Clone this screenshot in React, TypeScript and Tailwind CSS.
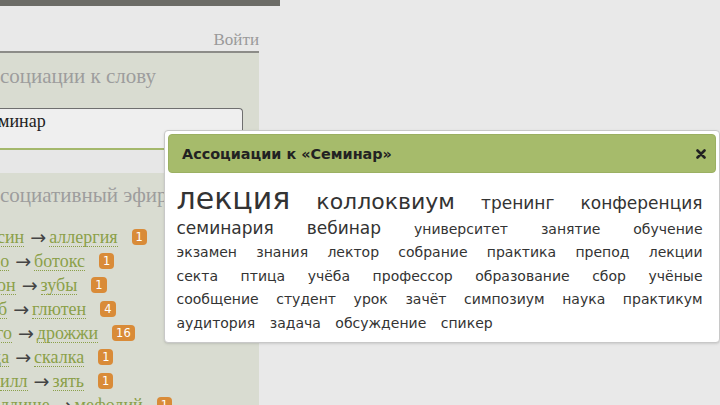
import React from 'react';

const serif = { fontFamily: '"Liberation Serif", "DejaVu Serif", serif' };
const sans = { fontFamily: '"DejaVu Sans", Verdana, sans-serif' };

type Row = { from: string; to: string; count: number; off: string };

// the page is scrolled sideways, so the first word of each row is cut at the edge
const rows: Row[] = [
  { from: 'син', to: 'аллергия', count: 1, off: '-ml-[3px]' },
  { from: 'до', to: 'ботокс', count: 1, off: '-ml-[9px]' },
  { from: 'он', to: 'зубы', count: 1, off: '-ml-[3px]' },
  { from: 'б', to: 'глютен', count: 4, off: '-ml-[2px]' },
  { from: 'го', to: 'дрожжи', count: 16, off: '-ml-[4px]' },
  { from: 'да', to: 'скалка', count: 1, off: '-ml-[8px]' },
  { from: 'илл', to: 'зять', count: 1, off: 'ml-0' },
  { from: 'лдище', to: 'мефодий', count: 1, off: 'ml-0' },
];

// word + size; the cloud is justified like the original
const words: [string, string][] = [
  ['лекция', 'text-[30px]'],
  ['коллоквиум', 'text-[22px]'],
  ['тренинг', 'text-[17px]'],
  ['конференция', 'text-[17px]'],
  ['семинария', 'text-[17px]'],
  ['вебинар', 'text-[17px]'],
  ['университет', ''],
  ['занятие', ''],
  ['обучение', ''],
  ['экзамен', ''],
  ['знания', ''],
  ['лектор', ''],
  ['собрание', ''],
  ['практика', ''],
  ['препод', ''],
  ['лекции', ''],
  ['секта', ''],
  ['птица', ''],
  ['учёба', ''],
  ['профессор', ''],
  ['образование', ''],
  ['сбор', ''],
  ['учёные', ''],
  ['сообщение', ''],
  ['студент', ''],
  ['урок', ''],
  ['зачёт', ''],
  ['симпозиум', ''],
  ['наука', ''],
  ['практикум', ''],
  ['аудитория', ''],
  ['задача', ''],
  ['обсуждение', ''],
  ['спикер', ''],
];

export default function App() {
  return (
    <div className="relative w-[720px] h-[405px] overflow-hidden bg-[#e9e9e9]">
      {/* Left column */}
      <div className="w-[280px]">
        <div className="h-[6px] bg-[#6c6c67]" />
        <div className="w-[259px]">
          <div className="h-[45px] flex items-end justify-end pb-[3px]">
            <span style={serif} className="text-[17px] text-[#9a9a9a] leading-none">
              Войти
            </span>
          </div>
          <div className="h-[2px] bg-[#8c8c88]" />
          <div className="bg-[#d9dcd1] h-[360px]">
            <div style={serif} className="pt-[10px] text-[21px] leading-[26px] text-[#9d9d9d]">
              социации к слову
            </div>
            <div className="mt-[19px] w-[243px] h-[40px] bg-[#efefef] border border-[#6f6f6f] border-l-0 border-b-0 rounded-tr-[4px]">
              <div style={serif} className="-ml-[2px] pt-[1px] text-[18px] text-[#222] leading-[22px]">
                минар
              </div>
            </div>
            <div className="h-[2px] bg-[#a4b86c]" />
            <div className="h-[23px] bg-[#e7e7e7]" />
            <div style={serif} className="pt-[9px] text-[21px] leading-[26px] text-[#9d9d9d]">
              социативный эфир
            </div>
            <div className="mt-[17px] flex flex-col">
              {rows.map((r) => (
                <div key={r.to} style={serif} className="h-[24px] flex items-center text-[18px] text-[#8ba049]">
                  <span className={`${r.off} border-b border-dotted border-[#8ba049] leading-[18px]`}>{r.from}</span>
                  <span style={sans} className="ml-[6px] mr-[3px] text-[#444] text-[19px] leading-[18px]">
                    →
                  </span>
                  <span className="border-b border-dotted border-[#8ba049] leading-[18px]">{r.to}</span>
                  <span
                    style={sans}
                    className="ml-[14px] h-[16px] min-w-[15px] px-[4px] rounded-[4px] bg-[#d98b38] text-white text-[11.5px] leading-[16px] text-center"
                  >
                    {r.count}
                  </span>
                </div>
              ))}
            </div>
          </div>
        </div>
      </div>

      {/* Popup */}
      <div className="absolute left-[164px] top-[130px] w-[556px] h-[213px] bg-white border border-[#c8c8c8] rounded-[4px] p-[3px] shadow-sm">
        <div className="h-[39px] bg-[#a6bb6b] border border-[#9bb062] rounded-[4px] flex items-center justify-between pt-[3px] pl-[13px] pr-[9px]">
          <span style={sans} className="text-[14.4px] font-bold text-[#222]">
            Ассоциации к «Семинар»
          </span>
          <svg width="10" height="10" viewBox="0 0 10 10" className="-mt-[3px]">
            <path d="M1.5 1.5 L8.5 8.5 M8.5 1.5 L1.5 8.5" stroke="#222" strokeWidth="2.6" strokeLinecap="round" />
          </svg>
        </div>
        <div style={sans} className="pl-[3.5px] pr-[8.5px] pt-[14px] text-justify text-[#333] text-[14px] leading-[23.5px]">
          {words.map(([w, cls], i) => (
            <React.Fragment key={w}>
              <span className={`mx-[5px] ${cls}`}>{w}</span>
              {i < words.length - 1 ? ' ' : ''}
            </React.Fragment>
          ))}
        </div>
      </div>
    </div>
  );
}
